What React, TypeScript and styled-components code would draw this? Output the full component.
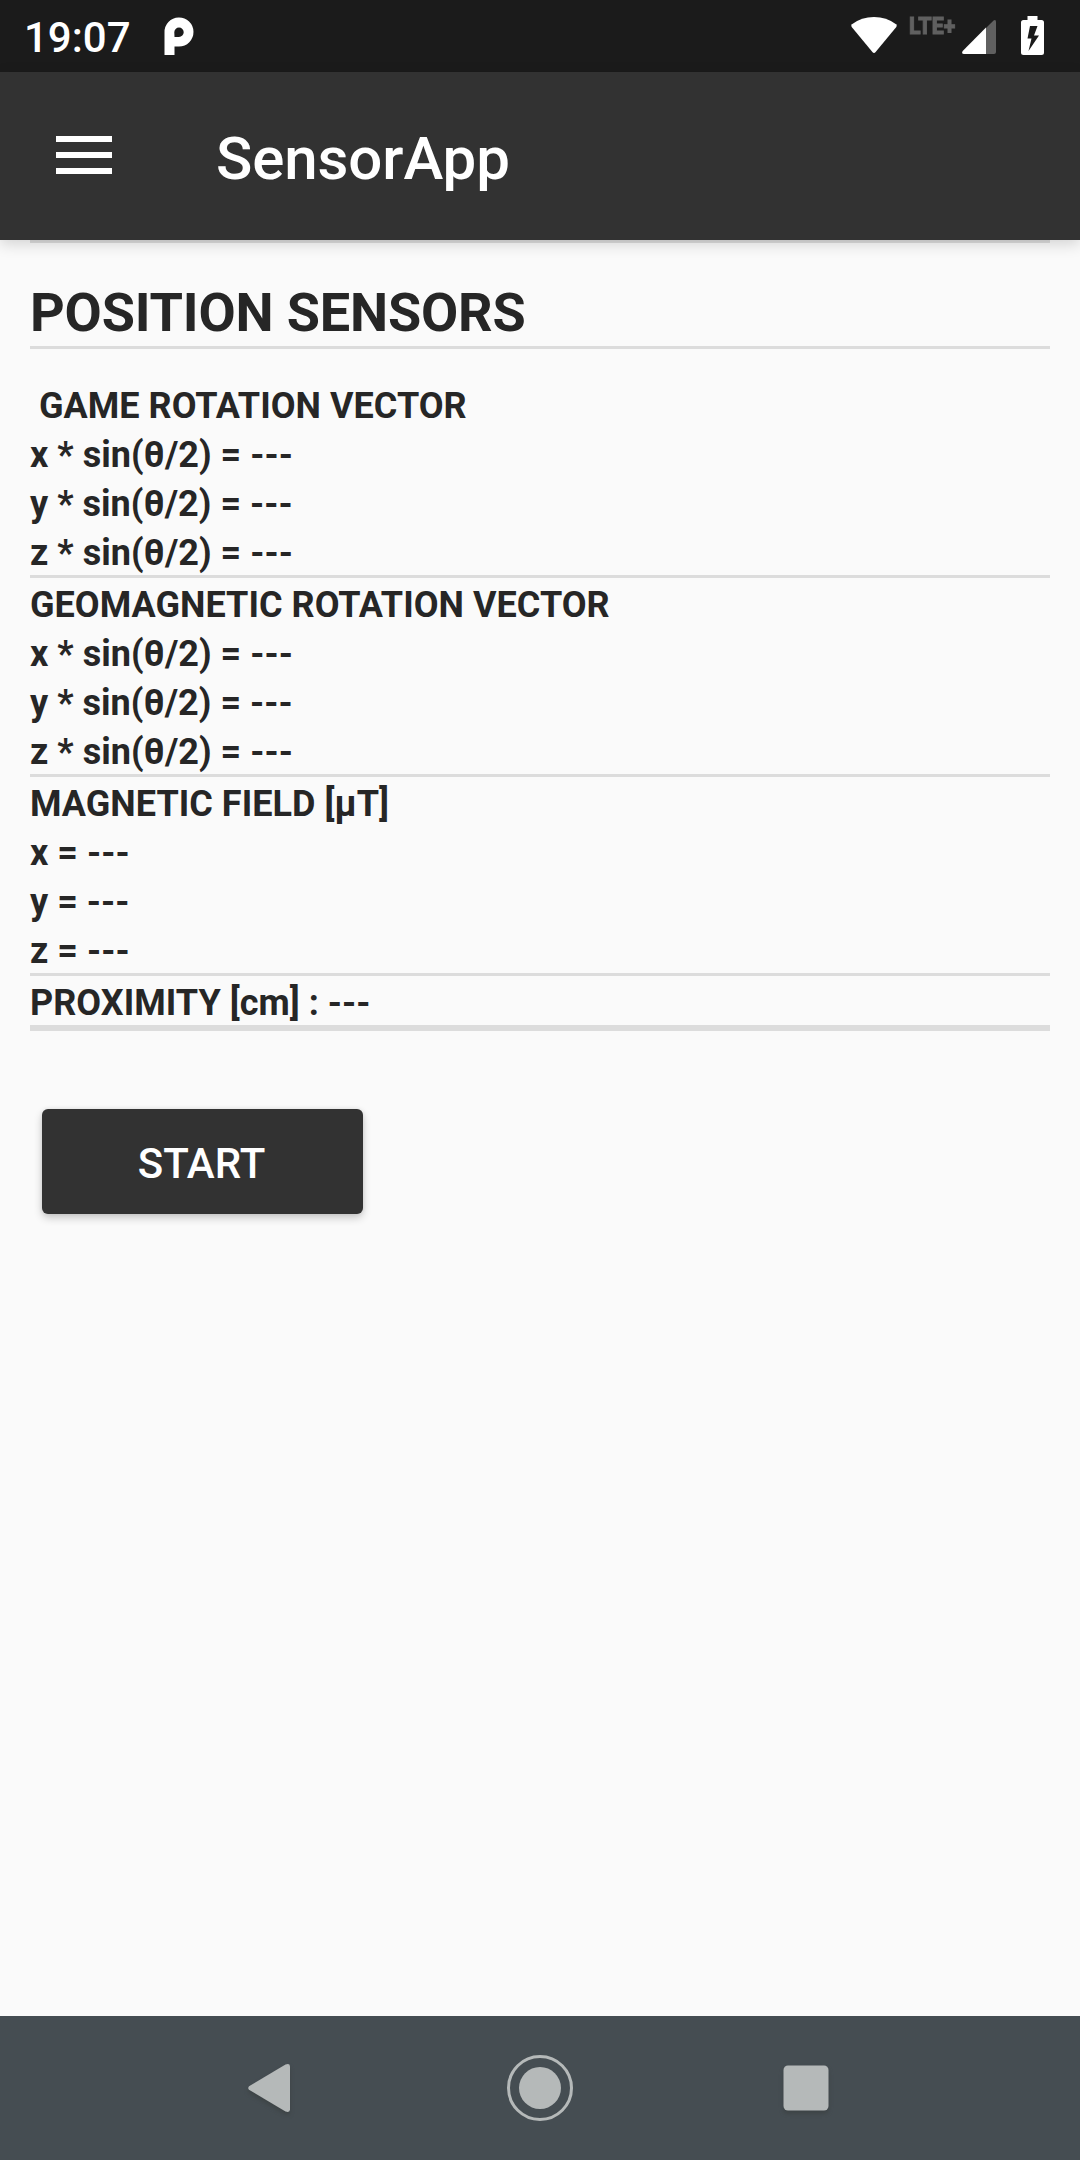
import React from "react";
import styled, { createGlobalStyle } from "styled-components";

const GlobalStyle = createGlobalStyle`
  html, body { margin: 0; padding: 0; background: #fafafa; }
  * { box-sizing: border-box; }
`;

const Screen = styled.div`
  width: 1080px;
  height: 2160px;
  display: flex;
  flex-direction: column;
  overflow: hidden;
  background: #fafafa;
  color: #262626;
  font-family: Roboto, "Liberation Sans", sans-serif;
`;

const StatusBar = styled.div`
  height: 72px;
  flex: none;
  display: flex;
  align-items: flex-start;
  padding: 0 36px 0 24px;
  background: #1b1b1b;
  color: #fff;
`;

const Clock = styled.span`
  width: 140px;
  padding-top: 3px;
  font-size: 42px;
  font-weight: 500;
  line-height: 69px;
`;

const StatusIcons = styled.div`
  display: flex;
  align-items: flex-start;
  margin-left: auto;
`;

const Glyph = styled.svg<{ $top?: number; $left?: number }>`
  display: block;
  flex: none;
  margin: ${(p) => p.$top ?? 0}px 0 0 ${(p) => p.$left ?? 0}px;
  overflow: visible;
`;

const NetworkType = styled.span`
  width: 52px;
  margin: 11px 0 0 12px;
  color: #606060;
  font-size: 24px;
  font-weight: 800;
  line-height: 30px;
  white-space: nowrap;
  -webkit-text-stroke: 1px #606060;
  transform: scaleX(0.89);
  transform-origin: 0 50%;
`;

const AppBar = styled.header`
  position: relative;
  z-index: 1;
  height: 168px;
  flex: none;
  display: flex;
  align-items: flex-start;
  padding-left: 56px;
  background: #323232;
  box-shadow: 0 4px 14px rgba(0, 0, 0, 0.16);
`;

const MenuButton = styled.button`
  display: flex;
  flex-direction: column;
  gap: 10px;
  width: 56px;
  margin: 64px 104px 0 0;
  padding: 0;
  border: 0;
  background: none;
`;

const MenuBar = styled.span`
  height: 6px;
  background: #fff;
`;

const AppTitle = styled.h1`
  margin: 0;
  padding-top: 5px;
  color: #fff;
  font-size: 60px;
  font-weight: 500;
  line-height: 163px;
  letter-spacing: -0.1px;
`;

const Content = styled.main`
  flex: 1;
  padding: 0 30px;
`;

const Divider = styled.div<{ $thick?: boolean }>`
  height: ${(p) => (p.$thick ? 6 : 3)}px;
  background: #dcdcdc;
`;

const Heading = styled.h2`
  height: 103px;
  margin: 0;
  padding-top: 37px;
  font-size: 54px;
  font-weight: 700;
  line-height: 65px;
  letter-spacing: -0.18px;
`;

const Group = styled.section<{ $spaced?: boolean }>`
  padding-top: ${(p) => (p.$spaced ? 30 : 0)}px;
`;

const Row = styled.div`
  height: 49px;
  padding-top: 5px;
  font-size: 36px;
  font-weight: 700;
  line-height: 44px;
  letter-spacing: 0.03px;
  white-space: pre;
`;

const StartButton = styled.button`
  display: block;
  width: 321px;
  height: 105px;
  margin: 78px 0 0 12px;
  padding: 4px 2px 0 0;
  border: 0;
  border-radius: 6px;
  background: #323232;
  box-shadow: 0 4px 8px rgba(0, 0, 0, 0.2), 0 0 4px rgba(0, 0, 0, 0.08);
  color: #fff;
  font-family: inherit;
  font-size: 42px;
  font-weight: 500;
  line-height: 101px;
`;

const NavBar = styled.nav`
  height: 144px;
  flex: none;
  display: flex;
  align-items: center;
  justify-content: center;
  gap: 200px;
  background: #454d52;
`;

const NavIcon = styled.svg`
  display: block;
  width: 66px;
  height: 66px;
  overflow: visible;
  fill: #b5b9b9;
  filter: drop-shadow(0 3px 2px rgba(50, 56, 54, 0.45));
`;

const HomeIcon = styled(NavIcon)`
  filter: none;
`;

const groups = [
  {
    title: " GAME ROTATION VECTOR",
    rows: ["x * sin(θ/2) = ---", "y * sin(θ/2) = ---", "z * sin(θ/2) = ---"],
  },
  {
    title: "GEOMAGNETIC ROTATION VECTOR",
    rows: ["x * sin(θ/2) = ---", "y * sin(θ/2) = ---", "z * sin(θ/2) = ---"],
  },
  { title: "MAGNETIC FIELD [µT]", rows: ["x = ---", "y = ---", "z = ---"] },
  { title: "PROXIMITY [cm] : ---", rows: [] },
];

export default function App() {
  return (
    <Screen>
      <GlobalStyle />
      <StatusBar>
        <Clock>19:07</Clock>
        <Glyph $top={18} width="30" height="37" viewBox="0 0 30 37">
          <path
            fill="#fff"
            fillRule="evenodd"
            d="M.5 37V14.500A14.500 14.500 0 1 1 15 28.500H10.500V37ZM10.500 19H15A4.700 4.700 0 1 0 10.300 14.300Z"
          />
        </Glyph>
        <StatusIcons>
          <Glyph $top={17} width="46" height="36" viewBox="0 0 46 36">
            <path
              fill="#fff"
              d="M1 7.200Q10.500 0 23 0T45 7.200Q46.400 8.500 45.300 10L24.600 35Q23 36.800 21.400 35L.7 10Q-.4 8.500 1 7.200Z"
            />
          </Glyph>
          <NetworkType>LTE+</NetworkType>
          <Glyph $top={20} $left={1} width="34" height="34" viewBox="0 0 34 34">
            <path fill="#606060" d="M24 8L31.300.7Q34-1 34 2V32Q34 34 32 34H24Z" />
            <path fill="#fff" d="M24 7.500V34H2Q-1 34 .7 31Z" />
          </Glyph>
          <Glyph $top={16} $left={25} width="23" height="39" viewBox="0 0 23 39">
            <path
              fill="#fff"
              fillRule="evenodd"
              d="M6.500 0H16.500V4H20.500Q23 4 23 6.500V36.500Q23 39 20.500 39H2.500Q0 39 0 36.500V6.500Q0 4 2.500 4H6.500ZM9 10L6.500 22.500H10.500L7.500 35L18 19.500H13L16.500 10Z"
            />
          </Glyph>
        </StatusIcons>
      </StatusBar>
      <AppBar>
        <MenuButton aria-label="Menu">
          <MenuBar />
          <MenuBar />
          <MenuBar />
        </MenuButton>
        <AppTitle>SensorApp</AppTitle>
      </AppBar>
      <Content>
        <Divider />
        <Heading>POSITION SENSORS</Heading>
        <Divider />
        {groups.map((g, i) => (
          <Group key={g.title} $spaced={i === 0}>
            <Row>{g.title}</Row>
            {g.rows.map((r) => (
              <Row key={r}>{r}</Row>
            ))}
            <Divider $thick={i === groups.length - 1} />
          </Group>
        ))}
        <StartButton>START</StartButton>
      </Content>
      <NavBar>
        <NavIcon viewBox="0 0 66 66">
          <path d="M8 31.200L44.500 9.500Q49 8 49 11.500V54.500Q49 58 44.500 56.500L8 34.800Q6.500 33 8 31.200Z" />
        </NavIcon>
        <HomeIcon viewBox="0 0 66 66">
          <circle cx="33" cy="33" r="31.500" fill="none" stroke="#b5b9b9" strokeWidth="3" />
          <circle cx="33" cy="33" r="21" />
        </HomeIcon>
        <NavIcon viewBox="0 0 66 66">
          <rect x="10.500" y="10.500" width="45" height="45" rx="4.500" />
        </NavIcon>
      </NavBar>
    </Screen>
  );
}
